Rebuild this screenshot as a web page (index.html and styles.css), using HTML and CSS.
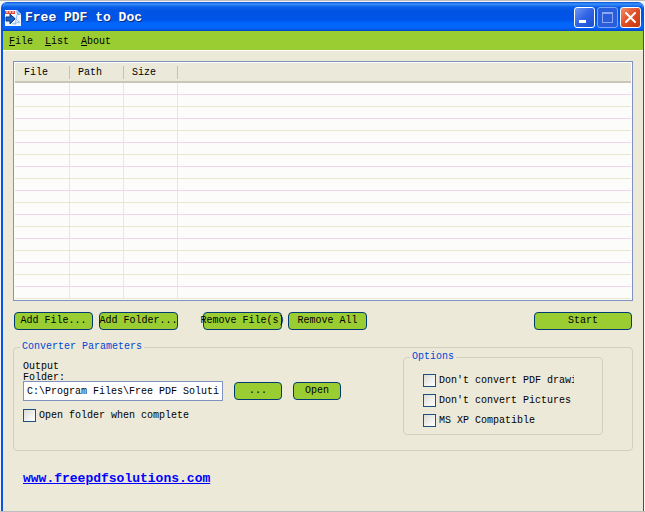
FILE: index.html
```html
<!DOCTYPE html>
<html lang="en">
<head>
  <meta charset="UTF-8" />
  <meta name="viewport" content="width=device-width, initial-scale=1" />
  <title>Free PDF to Doc</title>
  <link rel="stylesheet" href="styles.css">
</head>
<body>

  <div class="window">
    <header class="titlebar">
      <svg class="app-icon" width="16" height="16" viewBox="0 0 16 16">
        <path d="M0 0h12l4 4v12H0z" fill="#f4f6fc" />
        <path d="M11 0l5 5h-4z" fill="#7fb0f0" />
        <path d="M0 1h10v3H0z" fill="#e0483a" />
        <path d="M1 2h8" stroke="#fff" stroke-width="1" stroke-dasharray="2 1" />
        <path d="M8 6l7 7M7 14l8-2M12 5l-2 10" stroke="#8fc0f4" stroke-width="1" fill="none" />
        <path d="M1 7h4V4l5 5-5 5v-3H1z" fill="#1c5fc4" stroke="#0d3a86" stroke-width="1" />
      </svg>
      <h1 class="title">Free PDF to Doc</h1>
      <div class="window-buttons">
        <button type="button" class="win-btn" aria-label="Minimize">
          <svg width="19" height="19" viewBox="0 0 19 19"><path d="M4 12h7v3H4z" fill="#fff" /></svg>
        </button>
        <button type="button" class="win-btn win-btn-disabled" aria-label="Maximize" disabled>
          <svg width="19" height="19" viewBox="0 0 19 19"><path d="M4 4h11v11H4zM5 6v8h9V6z" fill="#8aa8f4" fill-rule="evenodd" /></svg>
        </button>
        <button type="button" class="win-btn win-btn-close" aria-label="Close">
          <svg width="19" height="19" viewBox="0 0 19 19"><path d="M5 5l9 9M14 5l-9 9" stroke="#fff" stroke-width="2" stroke-linecap="round" /></svg>
        </button>
      </div>
    </header>

    <nav class="menu">
      <a href="#file"><u>F</u>ile</a>
      <a href="#list"><u>L</u>ist</a>
      <a href="#about"><u>A</u>bout</a>
    </nav>

    <main class="content">
      <div class="file-list">
        <table class="file-table">
          <thead>
            <tr><th>File</th><th>Path</th><th>Size</th><th></th></tr>
          </thead>
          <tbody>
            <tr><td></td><td></td><td></td><td></td></tr>
            <tr><td></td><td></td><td></td><td></td></tr>
            <tr><td></td><td></td><td></td><td></td></tr>
            <tr><td></td><td></td><td></td><td></td></tr>
            <tr><td></td><td></td><td></td><td></td></tr>
            <tr><td></td><td></td><td></td><td></td></tr>
            <tr><td></td><td></td><td></td><td></td></tr>
            <tr><td></td><td></td><td></td><td></td></tr>
            <tr><td></td><td></td><td></td><td></td></tr>
            <tr><td></td><td></td><td></td><td></td></tr>
            <tr><td></td><td></td><td></td><td></td></tr>
            <tr><td></td><td></td><td></td><td></td></tr>
            <tr><td></td><td></td><td></td><td></td></tr>
            <tr><td></td><td></td><td></td><td></td></tr>
            <tr><td></td><td></td><td></td><td></td></tr>
            <tr><td></td><td></td><td></td><td></td></tr>
            <tr><td></td><td></td><td></td><td></td></tr>
            <tr><td></td><td></td><td></td><td></td></tr>
          </tbody>
        </table>
      </div>

      <div class="actions">
        <div class="btn-pair">
          <button type="button" class="btn">Add File...</button>
          <button type="button" class="btn">Add Folder...</button>
        </div>
        <div class="btn-pair">
          <button type="button" class="btn">Remove File(s)</button>
          <button type="button" class="btn">Remove All</button>
        </div>
        <button type="button" class="btn btn-start">Start</button>
      </div>

      <fieldset class="group parameters">
        <legend>Converter Parameters</legend>
        <div class="parameters-row">
          <div class="output">
            <label class="output-label" for="output-folder">Output Folder:</label>
            <div class="output-row">
              <input type="text" id="output-folder" class="output-input" value="C:\Program Files\Free PDF Solutions\" />
              <button type="button" class="btn btn-small">...</button>
              <button type="button" class="btn btn-small">Open</button>
            </div>
            <label class="check"><input type="checkbox" /><span>Open folder when complete</span></label>
          </div>

          <fieldset class="group options">
            <legend>Options</legend>
            <div class="options-list">
              <label class="check"><input type="checkbox" /><span>Don't convert PDF drawings</span></label>
              <label class="check"><input type="checkbox" /><span>Don't convert Pictures</span></label>
              <label class="check"><input type="checkbox" /><span>MS XP Compatible</span></label>
            </div>
          </fieldset>
        </div>
      </fieldset>

      <a href="#site" class="site-link">www.freepdfsolutions.com</a>
    </main>
  </div>

</body>
</html>
```

FILE: styles.css
```css
* {
  box-sizing: border-box;
}

body {
  display: flex;
  flex-direction: column;
  min-height: 100vh;
  margin: 0;
  padding: 1px 1px 0;
  border-top: 1px solid #bdbdbd;
  border-bottom: 1px solid #bdbdbd;
  background: #f4f4f4;
  font-family: "Liberation Mono", "Courier New", monospace;
  font-size: 10px;
  line-height: 12px;
  color: #000;
}

button,
input {
  font: inherit;
  color: inherit;
}

.window {
  flex: 1;
  border: solid #0a55e0;
  border-width: 0 1px 0 2px;
  border-radius: 6px 6px 0 0;
  background: #ece9d8;
  overflow: hidden;
}

/* title bar */
.titlebar {
  display: flex;
  align-items: center;
  height: 29px;
  padding: 2px 2px 0;
  background: linear-gradient(#0a4fd0 0, #3a92fb 2px, #0b5ee8 5px, #0054e3 9px, #0055e8 18px, #0366fc 21px, #0366fc 26px, #0346c4 29px);
}

.app-icon {
  flex: none;
}

.title {
  flex: 1;
  margin: 0 0 0 4px;
  font-size: 13px;
  line-height: 16px;
  color: #fff;
  text-shadow: 1px 1px 0 #0b2a78;
}

.window-buttons {
  display: flex;
  gap: 2px;
}

.win-btn {
  width: 21px;
  height: 21px;
  padding: 0;
  border: 1px solid #fff;
  border-radius: 3px;
  background: linear-gradient(135deg, #6f98f4, #2f62e4 50%, #1d4fd0);
  line-height: 0;
}

.win-btn-disabled {
  border-color: #7fa4f4;
  background: #2a5ddb;
}

.win-btn-close {
  background: linear-gradient(135deg, #f0906f, #e04c24 50%, #c23a12);
}

/* menu */
.menu {
  display: flex;
  gap: 12px;
  height: 20px;
  padding: 5px 6px 0;
  border-bottom: 1px solid #fff;
  background: #9acd32;
}

.menu a {
  color: #000;
  text-decoration: none;
}

.content {
  padding: 10px;
}

/* file list */
.file-list {
  padding: 1px;
  border: 1px solid #7f93c0;
  background: #fcfcfa;
}

.file-table {
  width: 100%;
  table-layout: fixed;
  border-collapse: separate;
  border-spacing: 0;
}

.file-table th {
  width: 54px;
  height: 20px;
  padding: 2px 0 0 8px;
  border-bottom: 2px solid #cbc7b8;
  background: linear-gradient(#c5c2b2, #c5c2b2) right 3px / 1px 13px no-repeat #ebe9d9;
  font-weight: normal;
  text-align: left;
}

.file-table td {
  height: 12px;
  padding: 0;
  border-right: 1px solid #ebe6d6;
  border-bottom: 1px solid #ebe6cf;
}

.file-table tr:nth-child(odd) td {
  border-bottom-color: #efd6ec;
}

.file-table th:first-child {
  width: 55px;
  padding-left: 9px;
}

.file-table th:last-child {
  width: auto;
  background: #ebe9d9;
}

.file-table td:last-child {
  border-right: none;
}

/* buttons */
.btn {
  display: flex;
  align-items: center;
  justify-content: center;
  width: 79px;
  height: 18px;
  padding: 0;
  border: 1px solid #003c74;
  border-radius: 4px;
  background: #9acd32;
  white-space: nowrap;
}

.btn-start {
  width: 98px;
  margin-left: auto;
}

.btn-small {
  width: 48px;
}

.actions {
  display: flex;
  gap: 25px;
  margin-top: 11px;
  padding: 0 1px;
}

.btn-pair {
  display: flex;
  gap: 6px;
}

/* group boxes */
.group {
  min-width: 0;
  margin: 0;
  padding: 0;
  border: 1px solid #d0d0bf;
  border-radius: 4px;
}

.group legend {
  margin-left: 6px;
  padding: 0 2px;
  line-height: 10px;
  color: #0046d5;
}

.parameters {
  margin-top: 12px;
}

.parameters-row {
  display: flex;
  justify-content: space-between;
  padding: 0 29px 15px 9px;
}

.output-label {
  display: block;
  width: 60px;
  height: 20px;
  margin-top: 9px;
  line-height: 11px;
}

.output-row {
  display: flex;
  align-items: center;
  gap: 11px;
  margin-bottom: 8px;
}

.output-input {
  width: 200px;
  height: 20px;
  padding: 0 3px;
  border: 1px solid #7f93c0;
  border-radius: 0;
  background: #fff;
}

.options {
  width: 200px;
}

.options-list {
  display: flex;
  flex-direction: column;
  gap: 7px;
  padding: 12px 28px 7px 19px;
}

.check {
  display: flex;
  align-items: center;
  gap: 3px;
  height: 13px;
}

.check span {
  overflow: hidden;
  white-space: nowrap;
}

.check input {
  flex: none;
  appearance: none;
  width: 13px;
  height: 13px;
  margin: 0;
  border: 1px solid #1c5180;
  background: linear-gradient(135deg, #dcdcd7, #fff);
}

.check input:checked {
  background: #21a121;
}

.site-link {
  display: inline-block;
  margin: 20px 0 0 10px;
  font-size: 13px;
  font-weight: bold;
  line-height: 15px;
  color: #00f;
}
```
